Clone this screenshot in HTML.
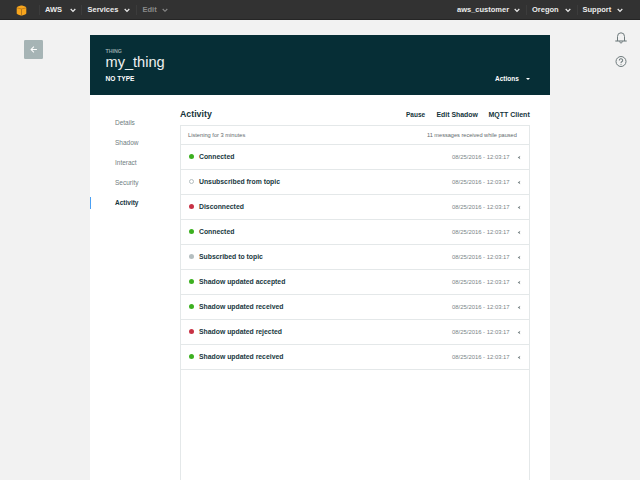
<!DOCTYPE html>
<html><head><meta charset="utf-8">
<style>
*{margin:0;padding:0;box-sizing:border-box}
html,body{width:640px;height:480px;overflow:hidden;background:#f2f2f2;font-family:"Liberation Sans",sans-serif;position:relative}
.abs{position:absolute;white-space:nowrap}
#nav{position:absolute;left:0;top:0;width:640px;height:20px;background:#323232;border-bottom:1px solid #252525}
.nt{position:absolute;top:0;height:20px;line-height:19.8px;font-size:7.5px;font-weight:bold;color:#ececec}
.sep{position:absolute;top:5px;width:1px;height:10px;background:#3c3c3c}
.chev{position:absolute;top:7.5px}
#card{position:absolute;left:90px;top:35px;width:460px;height:60px;background:#062e36}
#white{position:absolute;left:90px;top:95px;width:460px;height:385px;background:#fff}
.side{position:absolute;left:115px;font-size:6.5px;color:#6f7d80}
#tbl{position:absolute;left:180px;top:125px;width:350px;height:360px;border:1px solid #e4e8e9;border-bottom:none}
.row{position:absolute;left:0;width:348px;height:25px;border-top:1px solid #e4e8e9}
.dot{position:absolute;left:8.3px;top:9.2px;width:5.2px;height:5.2px;border-radius:50%}
.rt{position:absolute;left:18px;top:0;line-height:24px;font-size:6.85px;font-weight:bold;color:#18373e}
.ts{position:absolute;left:271px;top:0;line-height:24px;font-size:5.9px;color:#7a8588}
.car{position:absolute;left:335.7px;top:9.5px;width:4px;height:5px}
</style></head><body>
<div id="nav">
  <svg class="abs" style="left:16px;top:4.5px" width="11" height="11" viewBox="0 0 11 11">
    <path d="M5.5 0.6 C7 0.6 10.3 1.8 10.3 3 L10.3 8.2 C10.3 9.2 7 10.4 5.5 10.4 C4 10.4 0.7 9.2 0.7 8.2 L0.7 3 C0.7 1.8 4 0.6 5.5 0.6 Z" fill="#f7a51d"/>
    <path d="M1 3 Q5.5 4.8 10 3" fill="none" stroke="#b8791a" stroke-width="0.8"/>
    <path d="M5.5 4.1 L5.5 10" stroke="#b8791a" stroke-width="1"/>
  </svg>
  <div class="sep" style="left:39px"></div>
  <div class="nt" style="left:45px">AWS</div>
  <svg class="chev" style="left:70px" width="6" height="5" viewBox="0 0 6 5"><path d="M0.7 1 L3 3.3 L5.3 1" fill="none" stroke="#ececec" stroke-width="1.2"/></svg>
  <div class="sep" style="left:81px"></div>
  <div class="nt" style="left:87.5px">Services</div>
  <svg class="chev" style="left:124px" width="6" height="5" viewBox="0 0 6 5"><path d="M0.7 1 L3 3.3 L5.3 1" fill="none" stroke="#ececec" stroke-width="1.2"/></svg>
  <div class="sep" style="left:136px"></div>
  <div class="nt" style="left:142.5px;color:#8a8a8a">Edit</div>
  <svg class="chev" style="left:162px" width="6" height="5" viewBox="0 0 6 5"><path d="M0.7 1 L3 3.3 L5.3 1" fill="none" stroke="#8a8a8a" stroke-width="1.1"/></svg>

  <div class="nt" style="left:457px">aws_customer</div>
  <svg class="chev" style="left:514px" width="6" height="5" viewBox="0 0 6 5"><path d="M0.7 1 L3 3.3 L5.3 1" fill="none" stroke="#ececec" stroke-width="1.2"/></svg>
  <div class="sep" style="left:526px"></div>
  <div class="nt" style="left:532px">Oregon</div>
  <svg class="chev" style="left:564.5px" width="6" height="5" viewBox="0 0 6 5"><path d="M0.7 1 L3 3.3 L5.3 1" fill="none" stroke="#ececec" stroke-width="1.2"/></svg>
  <div class="sep" style="left:576.5px"></div>
  <div class="nt" style="left:582.5px">Support</div>
  <svg class="chev" style="left:617px" width="6" height="5" viewBox="0 0 6 5"><path d="M0.7 1 L3 3.3 L5.3 1" fill="none" stroke="#ececec" stroke-width="1.2"/></svg>
</div>

<div class="abs" style="left:24.4px;top:40px;width:19px;height:19px;background:#a6b4b5;border-radius:1.2px"></div>
<svg class="abs" style="left:29px;top:45px" width="10" height="9" viewBox="0 0 10 9"><path d="M7.9 4.5 L2.2 4.5 M4.9 1.7 L2.1 4.5 L4.9 7.3" fill="none" stroke="#fff" stroke-width="1.05"/></svg>

<!-- right icons -->
<svg class="abs" style="left:614px;top:31px" width="14" height="14" viewBox="0 0 14 14">
  <path d="M3.5 10 L3.5 5.5 A3.5 3.7 0 0 1 10.5 5.5 L10.5 10" fill="none" stroke="#6e7a7c" stroke-width="1"/>
  <path d="M1.3 10 L12.7 10" stroke="#6e7a7c" stroke-width="1.1"/>
  <path d="M5.5 10.4 Q7 14 8.5 10.4" fill="none" stroke="#6e7a7c" stroke-width="1"/>
</svg>
<svg class="abs" style="left:614px;top:55px" width="14" height="14" viewBox="0 0 14 14">
  <circle cx="7" cy="6.5" r="5" fill="none" stroke="#6e7a7c" stroke-width="1"/>
  <path d="M5.3 5.4 A1.7 1.6 0 1 1 7.7 6.8 Q7 7.2 7 8" fill="none" stroke="#6e7a7c" stroke-width="1.05"/>
  <circle cx="7" cy="9.2" r="0.55" fill="#6e7a7c"/>
</svg>

<div id="card">
  <div class="abs" style="left:15.5px;top:12.6px;font-size:5.3px;font-weight:bold;color:#92a4a7">THING</div>
  <div class="abs" style="left:15.5px;top:19.2px;font-size:14.6px;color:#eef0f0">my_thing</div>
  <div class="abs" style="left:15.5px;top:39.5px;font-size:6.6px;font-weight:bold;color:#fff">NO TYPE</div>
  <div class="abs" style="left:405px;top:40px;font-size:6.5px;font-weight:bold;color:#fff">Actions</div>
  <div class="abs" style="left:436px;top:43px;width:0;height:0;border-left:2px solid transparent;border-right:2px solid transparent;border-top:2px solid #fff"></div>
</div>
<div id="white"></div>

<div class="side abs" style="top:118.5px">Details</div>
<div class="side abs" style="top:138.5px">Shadow</div>
<div class="side abs" style="top:158.5px">Interact</div>
<div class="side abs" style="top:178.5px">Security</div>
<div class="side abs" style="top:198.5px;color:#15343b;font-weight:bold">Activity</div>
<div class="abs" style="left:89.5px;top:197px;width:1.5px;height:12.3px;background:#4aa0f4"></div>

<div class="abs" style="left:180px;top:108.5px;font-size:8.8px;font-weight:bold;color:#15343b">Activity</div>
<div class="abs" style="left:406px;top:110.7px;font-size:6.5px;font-weight:bold;color:#15343b">Pause</div>
<div class="abs" style="left:436.5px;top:110.7px;font-size:6.9px;font-weight:bold;color:#15343b">Edit Shadow</div>
<div class="abs" style="left:488.5px;top:110.7px;font-size:7px;font-weight:bold;color:#15343b">MQTT Client</div>

<div id="tbl">
  <div class="abs" style="left:7px;top:6px;font-size:5.7px;color:#5f6a6d">Listening for 3 minutes</div>
  <div class="abs" style="left:246px;top:6px;font-size:5.6px;color:#5f6a6d">11 messages received while paused</div>
  <div class="row" style="top:18px"><div class="dot" style="background:#3cb020"></div><div class="rt">Connected</div><div class="ts">08/25/2016 - 12:03:17</div><svg class="car" viewBox="0 0 4 5"><path d="M3.4 0.7 L0.7 2.5 L3.4 4.3 L2.6 2.5 Z" fill="#6f7b7d"/></svg></div>
  <div class="row" style="top:43px"><div class="dot" style="background:#fff;border:1px solid #b4bec0"></div><div class="rt">Unsubscribed from topic</div><div class="ts">08/25/2016 - 12:03:17</div><svg class="car" viewBox="0 0 4 5"><path d="M3.4 0.7 L0.7 2.5 L3.4 4.3 L2.6 2.5 Z" fill="#6f7b7d"/></svg></div>
  <div class="row" style="top:68px"><div class="dot" style="background:#c83245"></div><div class="rt">Disconnected</div><div class="ts">08/25/2016 - 12:03:17</div><svg class="car" viewBox="0 0 4 5"><path d="M3.4 0.7 L0.7 2.5 L3.4 4.3 L2.6 2.5 Z" fill="#6f7b7d"/></svg></div>
  <div class="row" style="top:93px"><div class="dot" style="background:#3cb020"></div><div class="rt">Connected</div><div class="ts">08/25/2016 - 12:03:17</div><svg class="car" viewBox="0 0 4 5"><path d="M3.4 0.7 L0.7 2.5 L3.4 4.3 L2.6 2.5 Z" fill="#6f7b7d"/></svg></div>
  <div class="row" style="top:118px"><div class="dot" style="background:#b4bec0"></div><div class="rt">Subscribed to topic</div><div class="ts">08/25/2016 - 12:03:17</div><svg class="car" viewBox="0 0 4 5"><path d="M3.4 0.7 L0.7 2.5 L3.4 4.3 L2.6 2.5 Z" fill="#6f7b7d"/></svg></div>
  <div class="row" style="top:143px"><div class="dot" style="background:#3cb020"></div><div class="rt">Shadow updated accepted</div><div class="ts">08/25/2016 - 12:03:17</div><svg class="car" viewBox="0 0 4 5"><path d="M3.4 0.7 L0.7 2.5 L3.4 4.3 L2.6 2.5 Z" fill="#6f7b7d"/></svg></div>
  <div class="row" style="top:168px"><div class="dot" style="background:#3cb020"></div><div class="rt">Shadow updated received</div><div class="ts">08/25/2016 - 12:03:17</div><svg class="car" viewBox="0 0 4 5"><path d="M3.4 0.7 L0.7 2.5 L3.4 4.3 L2.6 2.5 Z" fill="#6f7b7d"/></svg></div>
  <div class="row" style="top:193px"><div class="dot" style="background:#c83245"></div><div class="rt">Shadow updated rejected</div><div class="ts">08/25/2016 - 12:03:17</div><svg class="car" viewBox="0 0 4 5"><path d="M3.4 0.7 L0.7 2.5 L3.4 4.3 L2.6 2.5 Z" fill="#6f7b7d"/></svg></div>
  <div class="row" style="top:218px"><div class="dot" style="background:#3cb020"></div><div class="rt">Shadow updated received</div><div class="ts">08/25/2016 - 12:03:17</div><svg class="car" viewBox="0 0 4 5"><path d="M3.4 0.7 L0.7 2.5 L3.4 4.3 L2.6 2.5 Z" fill="#6f7b7d"/></svg></div>
  <div class="row" style="top:243px;height:1px"></div>
</div>
</body></html>
